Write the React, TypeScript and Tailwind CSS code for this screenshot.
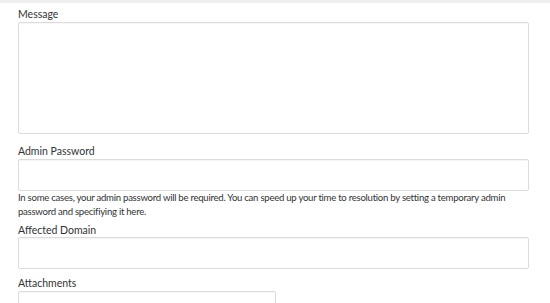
import React from "react";

const Label = ({ text, className = "" }: { text: string; className?: string }) => (
  <label className={`block text-[10.5px] leading-[14px] text-[#333] ${className}`}>
    {text}
  </label>
);

const inputCls =
  "block rounded-[2px] border border-[#dcdcdc] bg-white shadow-[inset_0_1px_1px_rgba(0,0,0,0.04)] outline-none";

export default function App() {
  return (
    <div
      className="h-[303px] w-[550px] overflow-hidden bg-white"
      style={{ fontFamily: "Lato, 'Open Sans', sans-serif" }}
    >
      <div className="h-[3px] bg-[#efefef]" />
      <form className="px-[18px] pr-[21px] pt-[4px]">
        <Label text="Message" className="mb-[1px]" />
        <textarea className={`${inputCls} h-[112px] w-full resize-none`} />

        <Label text="Admin Password" className="mt-[10px] mb-[1px]" />
        <input type="password" className={`${inputCls} h-[32px] w-full`} />
        <p className="text-[9.6px] leading-[14px] tracking-[-0.27px] text-[#333]">
          In some cases, your admin password will be required. You can speed up your time to
          resolution by setting a temporary admin password and specifiying it here.
        </p>

        <Label text="Affected Domain" className="mt-[4px]" />
        <input type="text" className={`${inputCls} h-[32px] w-full`} />

        <Label text="Attachments" className="mt-[7px] mb-[1px]" />
        <div className={`${inputCls} h-[32px] w-[258px]`} />
      </form>
    </div>
  );
}
